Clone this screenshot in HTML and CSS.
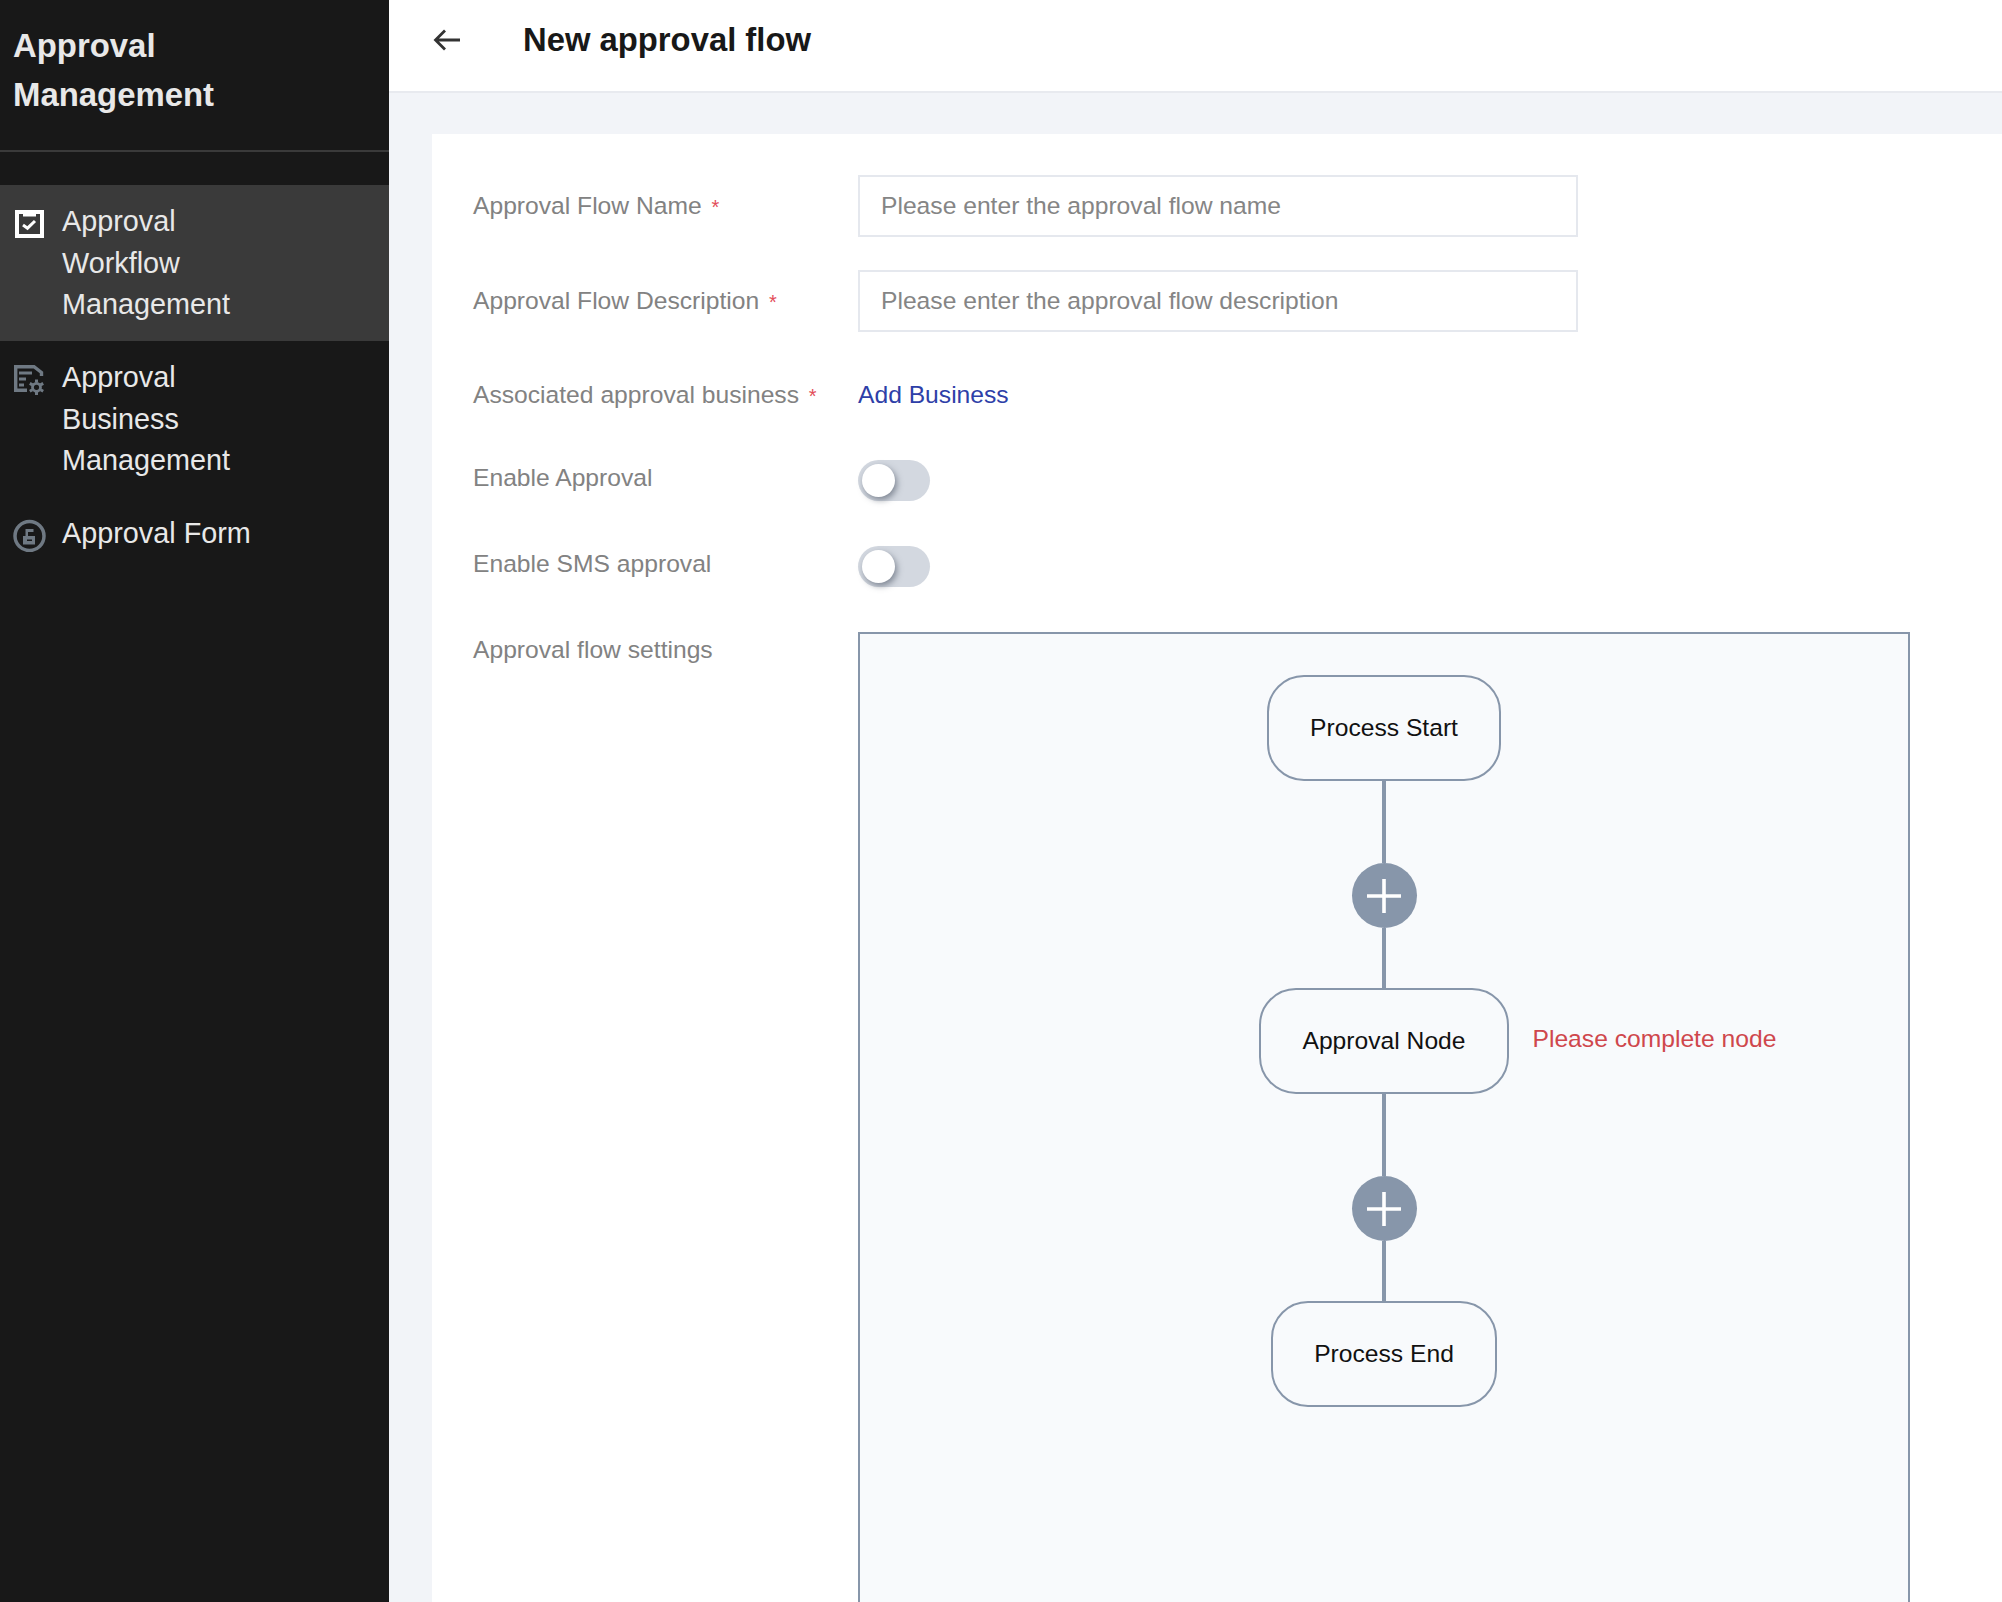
FILE: index.html
```html
<!DOCTYPE HTML>
<html>
<head>
  <meta charset="UTF-8">
  <title>New approval flow</title>
  <meta name="viewport" content="width=device-width, initial-scale=1">
  <link rel="stylesheet" href="styles.css">
</head>
<body>
  <aside class="sidebar">
    <div class="brand">Approval<br>Management</div>
    <nav class="menu">
      <a class="menu-item active" href="#">
        <svg class="menu-icon" viewBox="0 0 33 33">
          <path fill="#fff" fill-rule="evenodd" d="M2 3h29v28H2zM6 7v20h21V7h-4v2.500H10V7z"/>
          <path fill="none" stroke="#fff" stroke-width="3" d="M10 18l4.500 3.200L22 14"/>
        </svg>
        <span>Approval<br>Workflow<br>Management</span>
      </a>
      <a class="menu-item" href="#">
        <svg class="menu-icon" viewBox="0 0 33 33">
          <path fill="none" stroke="#6f7983" stroke-width="3.400" d="M28.500 13V9.500L21 3.700H2.700V27.300H14"/>
          <path fill="none" stroke="#6f7983" stroke-width="2.800" d="M6 10h13M6 16h7M6 22h5"/>
          <circle cx="23.500" cy="24.300" r="4" fill="none" stroke="#6f7983" stroke-width="2.800"/>
          <path stroke="#6f7983" stroke-width="3" d="M23.500 16.500v3M23.500 29v3M16.800 20.400l2.600 1.500M27.600 26.700l2.600 1.500M16.800 28.200l2.600-1.500M27.600 21.900l2.600-1.500"/>
        </svg>
        <span>Approval<br>Business<br>Management</span>
      </a>
      <a class="menu-item" href="#">
        <svg class="menu-icon" viewBox="0 0 33 33">
          <circle cx="16.500" cy="17" r="14.500" fill="none" stroke="#6f7983" stroke-width="3.500"/>
          <path fill="#6f7983" fill-rule="evenodd" d="M12.500 10h8v3h-5.500v4H22v8.500H10V17h2.500zM14 20.500V22h5v-1.500z"/>
        </svg>
        <span>Approval Form</span>
      </a>
    </nav>
  </aside>

  <div class="main">
    <header class="topbar">
      <svg class="back-icon" viewBox="0 0 28 24">
        <path fill="none" stroke="#333" stroke-width="2.800" d="M27 12H3M12 2.500L2.500 12 12 21.500"/>
      </svg>
      <h1>New approval flow</h1>
    </header>

    <div class="card">
      <div class="form-row">
        <label class="form-label input-label">Approval Flow Name <i>*</i></label>
        <input class="text-input" type="text" placeholder="Please enter the approval flow name">
      </div>
      <div class="form-row">
        <label class="form-label input-label">Approval Flow Description <i>*</i></label>
        <input class="text-input" type="text" placeholder="Please enter the approval flow description">
      </div>
      <div class="form-row link-row">
        <label class="form-label">Associated approval business <i>*</i></label>
        <a class="add-link" href="#">Add Business</a>
      </div>
      <div class="form-row switch-row">
        <label class="form-label">Enable Approval</label>
        <div class="switch"><span></span></div>
      </div>
      <div class="form-row switch-row">
        <label class="form-label">Enable SMS approval</label>
        <div class="switch"><span></span></div>
      </div>
      <div class="form-row">
        <label class="form-label">Approval flow settings</label>
        <div class="flow-box">
          <div class="flow-line">
            <div class="flow-node">Process Start</div>
          </div>
          <div class="connector long"></div>
          <div class="flow-line">
            <button class="add-node">
              <svg viewBox="0 0 34 34"><path stroke="#fff" stroke-width="3.600" d="M17 0v34M0 17h34"/></svg>
            </button>
          </div>
          <div class="connector"></div>
          <div class="flow-line">
            <div class="flow-node">Approval Node</div>
            <div class="node-error">Please complete node</div>
          </div>
          <div class="connector long"></div>
          <div class="flow-line">
            <button class="add-node">
              <svg viewBox="0 0 34 34"><path stroke="#fff" stroke-width="3.600" d="M17 0v34M0 17h34"/></svg>
            </button>
          </div>
          <div class="connector"></div>
          <div class="flow-line">
            <div class="flow-node">Process End</div>
          </div>
        </div>
      </div>
    </div>
  </div>
</body>
</html>
```

FILE: styles.css
```css
html, body {
  height: 100%;
}

body {
  margin: 0;
  display: flex;
  overflow: hidden;
  font-family: "Liberation Sans", Arial, sans-serif;
  font-size: 24.65px;
  background: #f2f4f8;
  color: #181818;
}

.sidebar {
  width: 389px;
  flex-shrink: 0;
  background: #181818;
  color: #e8e8e8;
}

.brand {
  height: 152px;
  box-sizing: border-box;
  padding: 22px 13px 0;
  font-size: 32.9px;
  font-weight: bold;
  line-height: 48.5px;
  border-bottom: 2px solid #3a3a3a;
}

.menu {
  margin-top: 33px;
}

.menu-item {
  display: flex;
  align-items: flex-start;
  padding: 16px 0 15.5px 13px;
  font-size: 28.8px;
  line-height: 41.5px;
  color: #e8e8e8;
  text-decoration: none;
}

.menu-item.active {
  background: #3a3a3a;
}

.menu-icon {
  width: 33px;
  height: 33px;
  flex-shrink: 0;
  margin: 6px 16px 0 0;
}

.main {
  flex: 1;
  min-width: 0;
  height: 100%;
  display: flex;
  flex-direction: column;
}

.topbar {
  height: 91px;
  flex-shrink: 0;
  display: flex;
  align-items: center;
  padding-left: 44px;
  background: #fff;
  border-bottom: 2px solid #e8eaef;
}

.back-icon {
  width: 28px;
  height: 24px;
  margin: 0 62px 12px 0;
}

.topbar h1 {
  margin: 0 0 12px;
  font-size: 32.8px;
  font-weight: bold;
  color: #181818;
}

.card {
  flex: 1;
  min-height: 0;
  overflow: hidden;
  margin: 41px 0 0 43px;
  padding: 41px 0 0 41px;
  background: #fff;
}

.form-row {
  display: flex;
  margin-bottom: 33px;
}

.form-label {
  width: 385px;
  flex-shrink: 0;
  line-height: 36px;
  color: #828282;
}

.form-label i {
  margin-left: 3px;
  font-style: normal;
  font-size: 20px;
  line-height: 1;
  color: #e34d59;
}

.input-label {
  line-height: 62px;
}

.text-input {
  width: 720px;
  height: 62px;
  box-sizing: border-box;
  padding: 0 21px;
  border: 2px solid #e5e8ee;
  outline: none;
  font: inherit;
  color: #333;
}

.text-input::placeholder {
  color: #858585;
  opacity: 1;
}

.link-row {
  margin-bottom: 35px;
}

.link-row .form-label,
.add-link {
  line-height: 60px;
}

.add-link {
  color: #2e3fa8;
  text-decoration: none;
}

.switch-row {
  margin-bottom: 45px;
}

.switch {
  width: 72px;
  height: 41px;
  padding: 4px;
  box-sizing: border-box;
  border-radius: 21px;
  background: #d3d8e0;
}

.switch span {
  display: block;
  width: 33px;
  height: 33px;
  border-radius: 50%;
  background: #fff;
  box-shadow: 2px 3px 6px rgba(60, 70, 85, 0.55);
}

.flow-box {
  width: 1052px;
  height: 1000px;
  flex-shrink: 0;
  box-sizing: border-box;
  padding-top: 41px;
  display: flex;
  flex-direction: column;
  border: 2px solid #8796aa;
  background: #f8fafc;
}

.flow-line {
  display: grid;
  grid-template-columns: 1fr auto 1fr;
  align-items: center;
  column-gap: 24px;
}

.flow-node {
  grid-column: 2;
  height: 106px;
  box-sizing: border-box;
  padding: 0 41px 1px;
  display: flex;
  align-items: center;
  border: 2px solid #8796aa;
  border-radius: 37px;
  color: #111;
}

.node-error {
  white-space: nowrap;
  margin-top: -4px;
  color: #cf474c;
}

.add-node {
  grid-column: 2;
  width: 65px;
  height: 65px;
  padding: 0;
  display: flex;
  align-items: center;
  justify-content: center;
  border: none;
  border-radius: 50%;
  background: #8796aa;
}

.add-node svg {
  width: 34px;
  height: 34px;
}

.connector {
  width: 4px;
  height: 60px;
  margin: 0 auto;
  background: #8796aa;
}

.connector.long {
  height: 82px;
}
```
